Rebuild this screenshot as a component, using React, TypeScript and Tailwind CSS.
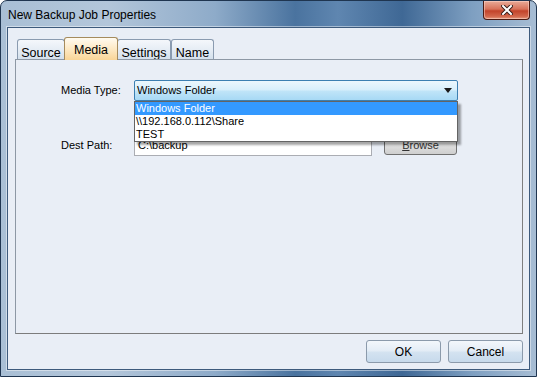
export default function App() {
    const tabs = [
        { label: 'Source', width: 'w-[48px]', active: false },
        { label: 'Media', width: 'w-[54px]', active: true },
        { label: 'Settings', width: 'w-[54px]', active: false },
        { label: 'Name', width: 'w-[43px]', active: false },
    ];

    const options = ['Windows Folder', '\\\\192.168.0.112\\Share', 'TEST'];

    return (
        <div className="w-[537px] h-[377px] bg-white font-['Liberation_Sans',Arial,sans-serif]">
            <div className="relative w-[537px] h-[377px] flex flex-col rounded-t-[7px] border border-[#1f3550] bg-[linear-gradient(90deg,#a9bfd5_0%,#b3c6da_20%,#8eabc9_40%,#4a739f_55%,#5f86b0_63%,#3f6895_75%,#7e9fc1_88%,#a7bdd4_100%)] overflow-hidden">
                {/* title bar */}
                <div className="h-[26px] flex items-start shrink-0">
                    <div className="pl-[7px] pt-[7px] text-[12px] leading-[14px] text-black">
                        New Backup Job Properties
                    </div>
                    <div className="ml-auto mr-[6px] w-[47px] h-[19px] rounded-b-[4px] border border-[#4a1a12] border-t-0 bg-[linear-gradient(180deg,#e9ab98_0%,#d8725a_45%,#c2432a_55%,#d2664b_85%,#e49a7e_100%)] shadow-[inset_0_0_0_1px_rgba(255,220,210,0.5)] flex items-center justify-center">
                        <svg width="12" height="10" viewBox="0 0 12 10">
                            <path d="M2 1 L10 9 M10 1 L2 9" stroke="#3a1d18" strokeWidth="4" strokeLinecap="square" />
                            <path d="M2 1 L10 9 M10 1 L2 9" stroke="#ffffff" strokeWidth="2" strokeLinecap="square" />
                        </svg>
                    </div>
                </div>

                {/* client area */}
                <div className="flex-1 mx-[6px] mb-[6px] border border-[#3d5a7c] shadow-[0_0_0_1px_rgba(255,255,255,0.45)] bg-[#e9eef6] flex flex-col pl-[7px] pr-[6px]">
                    {/* tabs */}
                    <div className="flex items-end h-[31px] pl-[2px] shrink-0">
                        {tabs.map((tab) =>
                            tab.active ? (
                                <div
                                    key={tab.label}
                                    className={`${tab.width} h-[23px] -mb-px -mx-[1px] z-10 relative rounded-t-[3px] border border-b-0 border-[#a58b5d] bg-[linear-gradient(180deg,#fffaf0_0%,#fde9c4_50%,#f9d597_100%)] text-[12.5px] text-black flex justify-center pt-[3px]`}
                                >
                                    {tab.label}
                                </div>
                            ) : (
                                <div
                                    key={tab.label}
                                    className={`${tab.width} h-[20px] rounded-t-[3px] border border-b-0 border-[#8a9bb0] bg-[linear-gradient(180deg,#f4f7fb_0%,#e6edf5_50%,#d4e0ec_100%)] text-[12.5px] text-black flex justify-center pt-[4px]`}
                                >
                                    {tab.label}
                                </div>
                            )
                        )}
                    </div>

                    {/* tab panel */}
                    <div className="h-[275px] border border-[#8d98a5] border-r-[#7f7f7f] border-b-[#7c7c7c] bg-[#e9eef6] pt-[20px] pl-[45px] text-[11px] text-black shrink-0">
                        <div className="flex items-center h-[21px]">
                            <div className="w-[73px]">Media Type:</div>
                            <div className="relative">
                                <div className="w-[324px] h-[21px] rounded-[2px] border border-[#3c7fb1] bg-[linear-gradient(180deg,#ecf7fd_0%,#d8effb_45%,#bfe4f8_55%,#a7d9f5_100%)] flex items-center pl-[2px] pr-[5px]">
                                    <span>Windows Folder</span>
                                    <svg className="ml-auto" width="8" height="5" viewBox="0 0 8 5">
                                        <path d="M0 0 H8 L4 5 Z" fill="#1a1a1a" />
                                    </svg>
                                </div>
                                {/* open list */}
                                <div className="absolute left-0 top-[21px] w-[324px] border border-[#646464] bg-white shadow-[3px_3px_2px_rgba(0,0,0,0.35)] z-20">
                                    {options.map((opt, i) => (
                                        <div
                                            key={opt}
                                            className={
                                                i === 0
                                                    ? 'h-[13px] leading-[13px] pl-[1px] bg-[#3399ff] text-white'
                                                    : 'h-[13px] leading-[13px] pl-[1px] text-black'
                                            }
                                        >
                                            {opt}
                                        </div>
                                    ))}
                                </div>
                            </div>
                        </div>

                        <div className="flex items-center h-[21px] mt-[34px]">
                            <div className="w-[73px]">Dest Path:</div>
                            <div className="w-[238px] h-[21px] border border-[#abadb3] bg-white flex items-center pl-[3px]">
                                C:\backup
                            </div>
                            <div className="ml-[12px] w-[73px] h-[19px] rounded-[3px] border border-[#707070] bg-[linear-gradient(180deg,#f2f2f2_0%,#ebebeb_45%,#dddddd_55%,#cfcfcf_100%)] flex items-center justify-center text-[#333]">
                                <span>
                                    <span className="underline">B</span>rowse
                                </span>
                            </div>
                        </div>
                    </div>

                    {/* buttons */}
                    <div className="flex justify-end gap-[7px] pt-[6px]">
                        <div className="w-[75px] h-[23px] rounded-[3px] border border-[#8b9aab] bg-[linear-gradient(180deg,#f3f7fb_0%,#e4edf6_45%,#d3e2f0_55%,#c7daec_100%)] flex items-center justify-center text-[12px] text-black">
                            OK
                        </div>
                        <div className="w-[75px] h-[23px] rounded-[3px] border border-[#8b9aab] bg-[linear-gradient(180deg,#f3f7fb_0%,#e4edf6_45%,#d3e2f0_55%,#c7daec_100%)] flex items-center justify-center text-[12px] text-black">
                            Cancel
                        </div>
                    </div>
                </div>
            </div>
        </div>
    );
}
